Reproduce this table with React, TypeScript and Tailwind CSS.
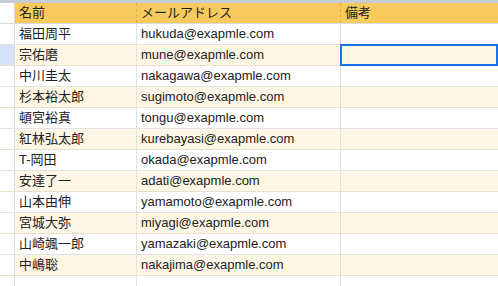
import React from "react";

type Person = { name: string; email: string };

const people: Person[] = [
    { name: "福田周平", email: "hukuda@exapmle.com" },
    { name: "宗佑磨", email: "mune@exapmle.com" },
    { name: "中川圭太", email: "nakagawa@exapmle.com" },
    { name: "杉本裕太郎", email: "sugimoto@exapmle.com" },
    { name: "頓宮裕真", email: "tongu@exapmle.com" },
    { name: "紅林弘太郎", email: "kurebayasi@exapmle.com" },
    { name: "T-岡田", email: "okada@exapmle.com" },
    { name: "安達了一", email: "adati@exapmle.com" },
    { name: "山本由伸", email: "yamamoto@exapmle.com" },
    { name: "宮城大弥", email: "miyagi@exapmle.com" },
    { name: "山崎颯一郎", email: "yamazaki@exapmle.com" },
    { name: "中嶋聡", email: "nakajima@exapmle.com" },
];

const font = { fontFamily: '"Liberation Sans", Arial, "Noto Sans CJK JP", sans-serif' };

export default function App() {
    return (
        <div className="w-[498px] h-[286px] overflow-hidden bg-white text-[13px] text-[#222]" style={font}>
            {/* top frozen strip */}
            <div className="h-[3px] bg-[#c7ccd6]" />

            {/* header row */}
            <div className="flex h-[21px] border-b border-[#d9d9d9]">
                <div className="w-[15px] shrink-0 bg-white border-r border-[#d9d9d9]" />
                <div className="w-[122px] shrink-0 bg-[#f7ca5e] border-r border-dashed border-[#d8ad4c] pl-[4px] flex items-center">名前</div>
                <div className="w-[204px] shrink-0 bg-[#f7ca5e] border-r border-dashed border-[#d8ad4c] pl-[4px] flex items-center">メールアドレス</div>
                <div className="flex-1 bg-[#f7ca5e] pl-[4px] flex items-center">備考</div>
            </div>

            {/* data rows */}
            {people.map((p, i) => {
                const odd = i % 2 === 1;
                const bg = odd ? "bg-[#fef7e6]" : "bg-white";
                const selected = i === 1;
                return (
                    <div key={p.email} className={`flex h-[21px] border-b ${odd ? "border-[#e8dfcc]" : "border-[#e2e2e2]"}`}>
                        <div className={`w-[15px] shrink-0 border-r border-[#d9d9d9] ${selected ? "bg-[#d3e3fd]" : "bg-white"}`} />
                        <div className={`w-[122px] shrink-0 ${bg} border-r border-[#e2e2e2] pl-[4px] flex items-center`}>{p.name}</div>
                        <div className={`w-[204px] shrink-0 ${bg} border-r border-[#e2e2e2] pl-[4px] flex items-center`}>{p.email}</div>
                        <div className={`flex-1 ${bg} relative`}>
                            {selected && <div className="absolute -top-[1px] -left-[1px] right-0 -bottom-[1px] border-2 border-[#1a73e8]" />}
                        </div>
                    </div>
                );
            })}

            {/* empty trailing row */}
            <div className="flex h-[21px]">
                <div className="w-[15px] shrink-0 border-r border-[#d9d9d9]" />
                <div className="w-[122px] shrink-0 border-r border-[#e2e2e2]" />
                <div className="w-[204px] shrink-0 border-r border-[#e2e2e2]" />
                <div className="flex-1" />
            </div>
        </div>
    );
}
